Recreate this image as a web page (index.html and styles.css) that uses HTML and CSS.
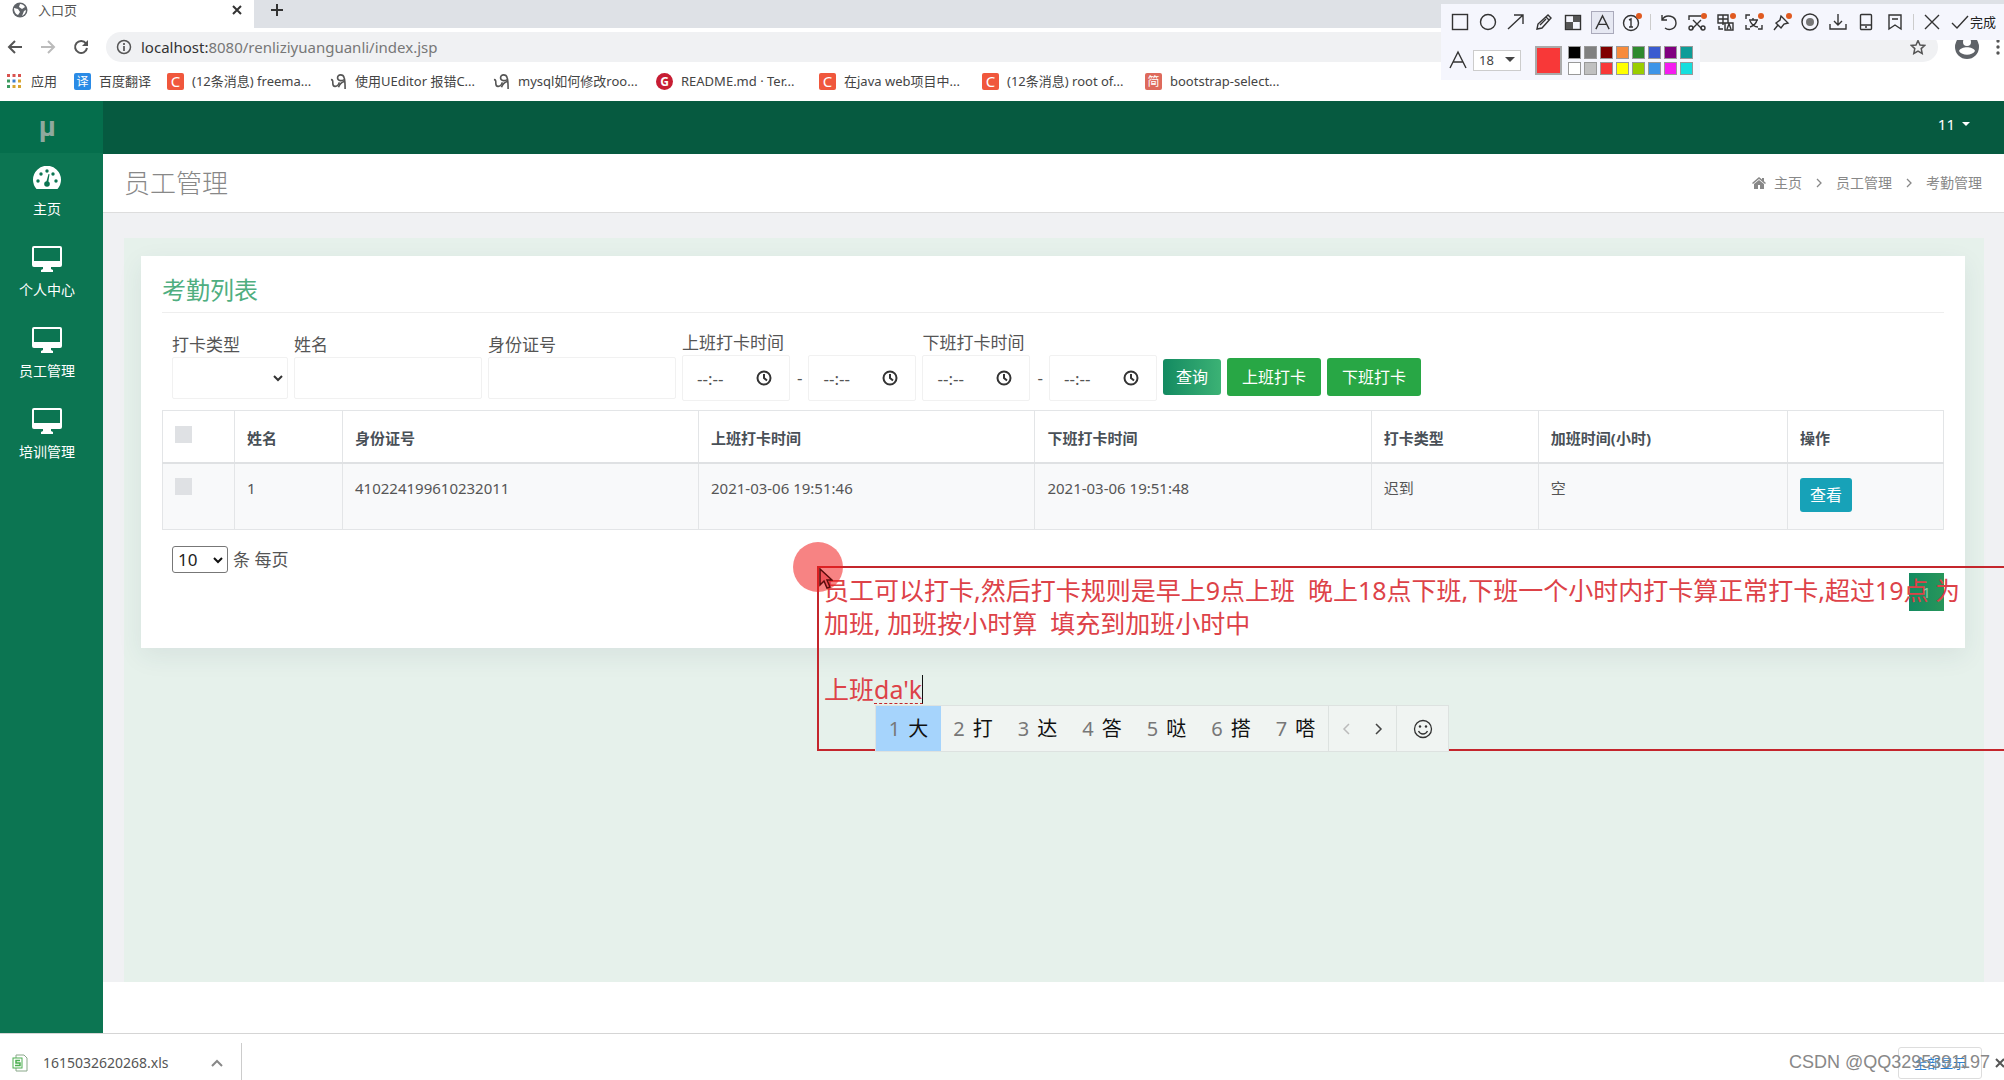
FILE: index.html
```html
<!DOCTYPE html>
<html lang="zh-CN">
<head>
<meta charset="utf-8">
<title>入口页</title>
<link rel="stylesheet" href="styles.css">
</head>
<body>
<svg class="defs" aria-hidden="true">
  <symbol id="monitor" viewBox="0 0 30 26"><path fill="currentColor" fill-rule="evenodd" d="M2 0h26a2 2 0 0 1 2 2v17a2 2 0 0 1-2 2h-9v2l2 1v2H9v-2l2-1v-2H2a2 2 0 0 1-2-2V2a2 2 0 0 1 2-2zm0 2v13h26V2z"/></symbol>
  <symbol id="clock" viewBox="0 0 16 16"><g fill="none" stroke="currentColor" stroke-width="2"><circle cx="8" cy="8" r="6.5"/><path d="M8 4v4l3 2.500"/></g></symbol>
  <symbol id="ueditor" viewBox="0 0 18 18"><g fill="none" stroke="#555" stroke-width="1.700"><path d="M1 7c2 0 2 1 2 4 0 4 4 4 6 1l1-2"/><path d="M16 17c0-5 0-9-1-12-1-4-7-4-7 0 0 3 4 4 7 2M9 15c1-3 3-5 6-6"/></g></symbol>
  <symbol id="chev" viewBox="0 0 10 10"><path d="M3 1l4 4-4 4" fill="none" stroke="currentColor" stroke-width="1.300"/></symbol>
</svg>

<header class="browser">
  <div class="tabs">
    <div class="tab">
      <svg width="16" height="16" viewBox="0 0 16 16"><circle cx="8" cy="8" r="7.500" fill="#5f6368"/><path d="M2 6l4 1 2 3-2 3c-3-1-4-4-4-7zM8 2c2 0 4 1 5 3l-3 2-3-2zM12 9l2-1c0 3-2 5-4 6z" fill="#fff"/></svg>
      <span class="tab-name">入口页</span>
      <svg class="tab-close" width="10" height="10" viewBox="0 0 10 10"><path d="M1 1l8 8M9 1l-8 8" stroke="#333" stroke-width="2"/></svg>
    </div>
    <svg class="tab-new" width="14" height="14" viewBox="0 0 14 14"><path d="M7 1v12M1 7h12" stroke="#333" stroke-width="2"/></svg>
  </div>
  <div class="toolbar">
    <svg width="16" height="16" viewBox="0 0 16 16"><path d="M15 8H2M8 2L2 8l6 6" fill="none" stroke="#555" stroke-width="2"/></svg>
    <svg width="16" height="16" viewBox="0 0 16 16"><path d="M1 8h13M8 2l6 6-6 6" fill="none" stroke="#bbb" stroke-width="2"/></svg>
    <svg width="16" height="16" viewBox="0 0 16 16"><path d="M13 4.500A6 6 0 1 0 14 9" fill="none" stroke="#555" stroke-width="2"/><path d="M15 1v6H9z" fill="#555"/></svg>
    <div class="address">
      <svg width="16" height="16" viewBox="0 0 16 16"><circle cx="8" cy="8" r="6.500" fill="none" stroke="#555" stroke-width="1.500"/><path d="M8 7v5M8 4v2" stroke="#555" stroke-width="1.700"/></svg>
      <span class="url"><b>localhost:</b>8080/renliziyuanguanli/index.jsp</span>
      <svg class="star" width="16" height="16" viewBox="0 0 16 16"><path d="M8 1.500l2 4.500 4.800.4-3.600 3.200 1 4.800L8 12l-4.200 2.400 1-4.800L1.200 6.400 6 6z" fill="none" stroke="#555" stroke-width="1.500"/></svg>
    </div>
    <svg width="24" height="24" viewBox="0 0 24 24"><circle cx="12" cy="12" r="12" fill="#5f6368"/><circle cx="12" cy="7" r="4" fill="#fff"/><path d="M4 16c2-5 14-5 16 0-3 5-13 5-16 0z" fill="#fff"/></svg>
    <svg width="4" height="16" viewBox="0 0 4 16" fill="#555"><circle cx="2" cy="2" r="1.700"/><circle cx="2" cy="8" r="1.700"/><circle cx="2" cy="14" r="1.700"/></svg>
  </div>
  <nav class="bookmarks">
    <a href="#" class="bm-apps"><svg width="14" height="14" viewBox="0 0 14 14"><path fill="#d9534f" d="M0 0h3v3H0zM5.500 0h3v3h-3zM11 0h3v3h-3z"/><path fill="#3b9a5f" d="M0 5.500h3v3H0z"/><path fill="#3f7fd0" d="M5.500 5.500h3v3h-3z"/><path fill="#d8a530" d="M11 5.500h3v3h-3zM5.500 11h3v3h-3zM11 11h3v3h-3z"/><path fill="#3b9a5f" d="M0 11h3v3H0z"/></svg>应用</a>
    <a href="#" class="bm-fanyi"><i class="fav blue">译</i>百度翻译</a>
    <a href="#"><i class="fav csdn">C</i>(12条消息) freema...</a>
    <a href="#"><svg width="17" height="17"><use href="#ueditor"/></svg>使用UEditor 报错C...</a>
    <a href="#"><svg width="17" height="17"><use href="#ueditor"/></svg>mysql如何修改roo...</a>
    <a href="#"><i class="fav gitee">G</i>README.md · Ter...</a>
    <a href="#"><i class="fav csdn">C</i>在java web项目中...</a>
    <a href="#"><i class="fav csdn">C</i>(12条消息) root of...</a>
    <a href="#"><i class="fav jian">简</i>bootstrap-select...</a>
  </nav>
</header>

<div class="app">
  <aside class="sidebar">
    <div class="logo">μ</div>
    <nav>
      <a href="#"><span class="ico"><svg width="28" height="24" viewBox="0 0 28 24"><path d="M3.500 23A14 14 0 1 1 24.500 23z" fill="#fff"/><g fill="#0c7552"><circle cx="5" cy="15" r="1.700"/><circle cx="8" cy="8" r="1.700"/><circle cx="14" cy="5" r="1.700"/><circle cx="20" cy="8" r="1.700"/><circle cx="23" cy="15" r="1.700"/><circle cx="14" cy="18" r="2.800"/><path d="M13 17l2.500-9 1 .3L15 18z"/></g></svg></span>主页</a>
      <a href="#"><span class="ico"><svg width="30" height="26"><use href="#monitor"/></svg></span>个人中心</a>
      <a href="#"><span class="ico"><svg width="30" height="26"><use href="#monitor"/></svg></span>员工管理</a>
      <a href="#"><span class="ico"><svg width="30" height="26"><use href="#monitor"/></svg></span>培训管理</a>
    </nav>
  </aside>
  <main class="main">
    <div class="topbar"><button class="user">11 <i class="caret"></i></button></div>
    <div class="pagehead">
      <h1>员工管理</h1>
      <nav class="crumbs">
        <svg width="14" height="12" viewBox="0 0 14 12"><path fill="#888" d="M7 0l3 2.500V1h2v3.200L14 6l-1 1-6-5-6 5-1-1zM7 3l5 4v5H8V8H6v4H2V7z"/></svg>
        <a href="#">主页</a>
        <svg class="sep" width="10" height="10"><use href="#chev"/></svg>
        <a href="#">员工管理</a>
        <svg class="sep" width="10" height="10"><use href="#chev"/></svg>
        <a href="#">考勤管理</a>
      </nav>
    </div>
    <div class="content">
      <div class="panel">
        <section class="card">
          <h2>考勤列表</h2>
          <form class="filters">
            <div class="field type"><label for="type">打卡类型</label>
              <div class="select"><select id="type"><option></option></select><svg width="10" height="7" viewBox="0 0 10 7"><path d="M1 1l4 4 4-4" fill="none" stroke="#333" stroke-width="2"/></svg></div></div>
            <div class="field text"><label for="name">姓名</label><input id="name" type="text"></div>
            <div class="field text"><label for="idno">身份证号</label><input id="idno" type="text"></div>
            <div class="field"><label for="in1">上班打卡时间</label>
              <div class="range"><span class="time"><input id="in1" type="text" value="--:--"><svg width="16" height="16"><use href="#clock"/></svg></span>-<span class="time"><input type="text" aria-label="上班打卡时间止" value="--:--"><svg width="16" height="16"><use href="#clock"/></svg></span></div></div>
            <div class="field"><label for="out1">下班打卡时间</label>
              <div class="range"><span class="time"><input id="out1" type="text" value="--:--"><svg width="16" height="16"><use href="#clock"/></svg></span>-<span class="time"><input type="text" aria-label="下班打卡时间止" value="--:--"><svg width="16" height="16"><use href="#clock"/></svg></span></div></div>
            <div class="actions">
              <button type="button" class="btn query">查询</button>
              <button type="button" class="btn ok">上班打卡</button>
              <button type="button" class="btn ok">下班打卡</button>
            </div>
          </form>
          <table>
            <colgroup><col class="c1"><col class="c2"><col class="c3"><col class="c4"><col class="c4"><col class="c5"><col class="c6"><col class="c7"></colgroup>
            <thead><tr><th><input type="checkbox" aria-label="全选"></th><th>姓名</th><th>身份证号</th><th>上班打卡时间</th><th>下班打卡时间</th><th>打卡类型</th><th>加班时间(小时)</th><th>操作</th></tr></thead>
            <tbody><tr><td><input type="checkbox" aria-label="选择"></td><td>1</td><td>410224199610232011</td><td>2021-03-06 19:51:46</td><td>2021-03-06 19:51:48</td><td>迟到</td><td>空</td><td class="op"><button type="button" class="btn view">查看</button></td></tr></tbody>
          </table>
          <div class="pagesize">
            <div class="select small"><select id="size"><option>10</option></select><svg width="10" height="7" viewBox="0 0 10 7"><path d="M1 1l4 4 4-4" fill="none" stroke="#111" stroke-width="2"/></svg></div>
            <label for="size">条 每页</label>
          </div>
          <div class="pager"><button type="button">1</button></div>
        </section>
      </div>
    </div>
    <footer class="foot"></footer>
  </main>
</div>

<div class="downloads">
  <div class="file">
    <svg width="16" height="18" viewBox="0 0 16 18"><path d="M4 1h8l3 3v13H4z" fill="#fff" stroke="#8aa88a"/><rect x="1" y="4" width="9" height="10" fill="#fff" stroke="#4caf50"/><path d="M8 6.500H4V9h4v2.500H3" fill="none" stroke="#4caf50" stroke-width="1.500"/></svg>
    <span>1615032620268.xls</span>
    <svg class="up" width="12" height="8" viewBox="0 0 12 8"><path d="M1 7l5-5 5 5" fill="none" stroke="#888" stroke-width="2"/></svg>
  </div>
  <button class="all">全部显示</button>
  <svg class="close" width="10" height="10" viewBox="0 0 10 10"><path d="M1 1l8 8M9 1l-8 8" stroke="#555" stroke-width="2"/></svg>
  <span class="mark">CSDN @QQ3295391197</span>
</div>

<div class="snip">
  <div class="tools">
    <svg viewBox="0 0 20 20"><rect x="2.500" y="2.500" width="15" height="15"/></svg>
    <svg viewBox="0 0 20 20"><circle cx="10" cy="10" r="7.500"/></svg>
    <svg viewBox="0 0 20 20"><path d="M2 17L17 3M8 3h9v9"/></svg>
    <svg viewBox="0 0 20 20"><path d="M3 17l1-5L14 3l3 3-9 10zM12 5l3 3M6 13l6-6"/></svg>
    <svg viewBox="0 0 20 20"><rect x="2.500" y="3.500" width="15" height="14"/><path class="f" d="M10 4h7v6h-7zM3 10h7v7H3z"/></svg>
    <svg class="on" viewBox="0 0 20 20"><path d="M3 17l7-14 7 14M6 12h8"/></svg>
    <svg viewBox="0 0 20 20"><circle cx="9" cy="11" r="7.500"/><path d="M7 8l2-1v8M7 15h4"/><circle class="dot" cx="17" cy="4" r="3"/></svg>
    <i class="bar"></i>
    <svg viewBox="0 0 20 20"><path d="M3 3v5h5M3 8c4-7 14-4 14 3 0 6-7 8-11 5"/></svg>
    <svg viewBox="0 0 20 20"><path d="M2 8V4h12M6 8l9 9M14 8l-9 9"/><circle cx="4" cy="16" r="2"/><circle cx="16" cy="16" r="2"/><circle class="dot" cx="17" cy="4" r="3"/></svg>
    <svg viewBox="0 0 20 20"><path d="M2 3h10v8H2zM2 7h10M7 3v10M9 11h8v7H9zM11 17l2-5 2 5M3 14v3h4"/><circle class="dot" cx="17" cy="4" r="3"/></svg>
    <svg viewBox="0 0 20 20"><path d="M2 7V3h4M2 13v4h4M14 17h4v-4M5 8h9M9 6v2M13 8c-1 4-4 6-7 7M6 9c2 4 5 6 8 6"/><circle class="dot" cx="17" cy="4" r="3"/></svg>
    <svg viewBox="0 0 20 20"><path d="M9 4l7 7-4 1-3 4-5-5 4-3zM6 13l-4 5"/><circle class="dot" cx="17" cy="4" r="3"/></svg>
    <svg viewBox="0 0 20 20"><circle cx="10" cy="10" r="8"/><circle class="g" cx="10" cy="10" r="4"/></svg>
    <svg viewBox="0 0 20 20"><path d="M10 2v11M6 9l4 4 4-4M2 12v5h16v-5"/></svg>
    <svg viewBox="0 0 20 20"><rect x="4.500" y="2.500" width="11" height="15" rx="1"/><path d="M5 13h10M9 15h2"/></svg>
    <svg viewBox="0 0 20 20"><path d="M4 3h12v14l-6-4-6 4zM7 7h6"/></svg>
    <i class="bar"></i>
    <svg viewBox="0 0 20 20"><path d="M3 3l14 14M17 3L3 17"/></svg>
    <span class="done"><svg viewBox="0 0 20 20"><path d="M2 11l5 5L18 4"/></svg>完成</span>
  </div>
  <div class="options">
    <svg viewBox="0 0 20 20"><path d="M2 18l8-16 8 16M5 12h10"/></svg>
    <div class="fsize"><select aria-label="字号"><option>18</option></select><i class="caret"></i></div>
    <i class="current"></i>
    <div class="swatches">
      <i style="background:#000"></i><i style="background:#808080"></i><i style="background:#800000"></i><i style="background:#f78b3c"></i><i style="background:#2f8a2f"></i><i style="background:#3a5bd0"></i><i style="background:#800080"></i><i style="background:#0e9c98"></i>
      <i style="background:#fff"></i><i style="background:#c0c0c0"></i><i style="background:#f83838"></i><i style="background:#ff0"></i><i style="background:#9acd00"></i><i style="background:#3d94e8"></i><i style="background:#f41af0"></i><i style="background:#16dede"></i>
    </div>
  </div>
</div>

<div class="note">
  <p>员工可以打卡,然后打卡规则是早上9点上班  晚上18点下班,下班一个小时内打卡算正常打卡,超过19点 为
加班, 加班按小时算  填充到加班小时中

上班<u>da'k</u></p>
  <i class="spot"></i>
  <svg class="cursor" width="14" height="22" viewBox="0 0 14 22"><path d="M1 1v16l4-4 3 7 3-1-3-7h5z" fill="#f0555a" stroke="#5a0c0c" stroke-width="1.500"/></svg>
</div>
<div class="ime">
  <span class="cand sel"><em>1</em>大</span><span class="cand"><em>2</em>打</span><span class="cand"><em>3</em>达</span><span class="cand"><em>4</em>答</span><span class="cand"><em>5</em>哒</span><span class="cand"><em>6</em>搭</span><span class="cand"><em>7</em>嗒</span>
  <span class="nav"><svg width="10" height="14" viewBox="0 0 10 14"><path d="M8 2L3 7l5 5" fill="none" stroke="#bbb" stroke-width="1.500"/></svg><svg width="10" height="14" viewBox="0 0 10 14"><path d="M2 2l5 5-5 5" fill="none" stroke="#444" stroke-width="1.500"/></svg></span>
  <span class="smile"><svg width="20" height="20" viewBox="0 0 20 20"><g fill="none" stroke="#333" stroke-width="1.300"><circle cx="10" cy="10" r="8.500"/><path d="M5.500 12c2 4 7 4 9 0"/></g><circle cx="7" cy="7.500" r="1.200" fill="#333"/><circle cx="13" cy="7.500" r="1.200" fill="#333"/></svg></span>
</div>
</body>
</html>
```
FILE: styles.css
```css
* { box-sizing: border-box; }
body {
  margin: 0; min-height: 100vh; display: flex; flex-direction: column; position: relative; overflow-x: hidden;
  font: 15px/20px "Noto Sans", "Noto Sans CJK SC", sans-serif; color: #555; background: #fff;
}
a { color: inherit; text-decoration: none; }
i, em { font-style: normal; }
button, input, select { font: inherit; color: inherit; margin: 0; }
svg { flex: none; }
.defs { position: absolute; width: 0; height: 0; }
.caret { display: inline-block; border: 4px solid transparent; border-top-color: currentColor; border-bottom: 0; }

/* browser window */
.browser { height: 101px; }
.tabs { height: 28px; display: flex; align-items: center; background: #dee1e6; }
.tab { width: 254px; height: 28px; padding: 0 12px 8px; display: flex; align-items: center; gap: 10px; background: #fff; font-size: 13px; }
.tab-close { margin-left: auto; }
.tab-new { margin: 0 0 8px 16px; }
.toolbar { height: 37px; padding: 0 4px 0 7px; display: flex; align-items: center; gap: 17px; }
.address { flex: 1; height: 30px; padding: 0 12px 0 10px; display: flex; align-items: center; gap: 9px; background: #f0f1f3; border-radius: 15px; color: #777; }
.url b { font-weight: 400; color: #333; }
.star { margin-left: auto; }
.bookmarks { height: 32px; padding-left: 7px; display: flex; align-items: center; font-size: 13px; color: #444; }
.bookmarks a { width: 163px; display: flex; align-items: center; gap: 8px; white-space: nowrap; }
.bookmarks .bm-apps { width: 67px; gap: 10px; }
.bookmarks .bm-fanyi { width: 93px; }
.fav { width: 17px; height: 17px; border-radius: 2px; color: #fff; font-size: 12px; line-height: 17px; text-align: center; }
.blue { background: #2a8be6; }
.csdn { background: #f0573c; font-size: 15px; }
.gitee { background: #c71d33; border-radius: 50%; font-weight: 700; }
.jian { background: #de6a5c; }

/* application */
.app { flex: 1; display: flex; }
.sidebar { width: 103px; flex: none; background: #0c7552; color: #fff; text-align: center; font-size: 14px; }
.logo { height: 52px; padding-right: 8px; background: #056e4c; color: #8fa99e; font: 700 28px/52px Roboto, sans-serif; }
.sidebar nav { padding: 3px 9px 0 0; }
.sidebar nav a { display: block; height: 81px; }
.ico { height: 43px; display: flex; align-items: center; justify-content: center; }
.main { flex: 1; min-width: 0; display: flex; flex-direction: column; background: #f0f1f3; }
.topbar { height: 53px; padding-right: 34px; display: flex; justify-content: flex-end; align-items: center; background: #065a40; }
.user { padding: 0 0 8px; border: 0; background: none; color: #fff; display: flex; align-items: center; gap: 7px; }
.pagehead { height: 59px; padding: 0 22px 0 21px; display: flex; align-items: center; justify-content: space-between; background: #fff; border-bottom: 1px solid #ddd; color: #888; }
h1 { margin: 0; font-size: 26px; line-height: 36px; font-weight: 300; }
.crumbs { display: flex; align-items: center; gap: 8px; font-size: 14px; }
.crumbs .sep { margin: 0 4px; }
.content { flex: 1; padding: 25px 20px 0 21px; display: flex; }
.panel { flex: 1; min-width: 0; padding: 18px 19px 0 17px; background: #e6f1eb; }
.card { min-height: 392px; padding: 18px 21px 36px; background: #fff; box-shadow: 0 8px 24px rgba(40, 60, 90, .08); }
h2 { margin: 0 0 14px; padding-bottom: 6px; border-bottom: 1px solid #eee; font-size: 24px; line-height: 32px; font-weight: 400; color: #4fae80; }
.filters { height: 83px; padding: 0 10px; display: flex; gap: 6px; align-items: flex-start; font-size: 17px; white-space: nowrap; }
.field label { display: block; height: 28px; line-height: 32px; }
.field input, .type select { width: 100%; height: 42px; border: 1px solid #f1f1f1; border-radius: 2px; background: #fff; display: block; }
.text { width: 188px; padding-top: 2px; }
.type { width: 116px; padding-top: 2px; }
.select { position: relative; }
.select select, .fsize select { appearance: none; }
.select svg { position: absolute; right: 5px; top: 50%; margin-top: -3px; pointer-events: none; }
.range { display: flex; align-items: center; }
.time { position: relative; width: 108px; }
.range .time:first-child { margin-right: 7px; }
.range .time:last-child { margin-left: 6px; }
.time input { height: 46px; padding: 0 14px; font-size: 17px; }
.time svg { position: absolute; right: 18px; top: 15px; color: #333; }
.actions { padding-top: 31px; display: flex; gap: 6px; align-items: center; }
.btn { height: 38px; padding: 0 15px; border: 0; border-radius: 3px; color: #fff; font-size: 16px; }
.query { height: 36px; padding: 0 13px; background: linear-gradient(90deg, #138a61, #3cb275); }
.ok { background: #28a745; }
table { width: 100%; table-layout: fixed; border-collapse: collapse; }
th, td { padding: 14px 12px; text-align: left; vertical-align: top; border: 1px solid #e3e5e7; }
th { height: 52px; padding: 17px 12px 12px; border-bottom: 2px solid #dfe1e3; color: #495057; }
td { height: 67px; background: #f8f9fa; }
.view { height: 34px; padding: 0 10px; background: #17a2b8; }
table input { appearance: none; display: block; width: 17px; height: 17px; background: #dfe1e4; }
th input { margin-top: -2px; }
.c1 { width: 72px; } .c2 { width: 108px; } .c3 { width: 20%; } .c4 { width: 336px; width: 18.9%; } .c5 { width: 167px; } .c6 { width: 14%; } .c7 { width: 156px; }
.pagesize { padding: 16px 10px 0; display: flex; align-items: center; gap: 5px; font-size: 17px; }
.small select { width: 56px; height: 27px; padding: 0 5px; border: 1px solid #777; border-radius: 3px; background: #fff; color: #222; }
.pager { display: flex; justify-content: flex-end; }
.pager button { width: 35px; height: 38px; border: 0; color: #8fc8a8; background: linear-gradient(90deg, #138a61, #28965a); }
.foot { height: 51px; background: #fff; }

/* download shelf */
.downloads { position: relative; height: 47px; border-top: 1px solid #d5d5d5; display: flex; align-items: center; padding: 11px 0 0; background: #fff; overflow: hidden; }
.file { width: 242px; height: 40px; padding: 0 18px 0 12px; display: flex; align-items: center; gap: 15px; border-right: 1px solid #ccc; font-size: 14px; }
.up { margin-left: auto; }
.all { margin-left: auto; width: 84px; height: 32px; border: 1px solid #ddd; border-radius: 3px; background: #fff; color: #2a7fd0; font-size: 13px; }
.close { margin: 0 -1px 0 13px; }
.mark { position: absolute; right: 14px; top: 17px; font: 18px/22px "Liberation Sans", sans-serif; color: #888; }

/* capture tool palette */
.snip { position: absolute; top: 4px; right: 0; width: 563px; }
.snip svg { fill: none; stroke: #333; stroke-width: 1.400; width: 20px; height: 20px; }
.tools { height: 36px; padding: 0 8px 0 9px; display: flex; align-items: center; justify-content: space-between; background: #f5f6fd; }
.tools .on { width: 23px; height: 23px; padding: 1px; border: 1px solid #aab; background: #e6e8f2; }
.tools .f { fill: #555; stroke: none; }
.tools .g { fill: #777; stroke: none; }
.tools .dot { fill: #e05a20; stroke: none; }
.bar { width: 1px; height: 16px; background: #ccc; }
.done { display: flex; align-items: center; font-size: 13px; color: #222; }
.options { width: 259px; height: 40px; padding: 0 7px; display: flex; align-items: center; background: #f5f6fd; }
.fsize { position: relative; width: 48px; margin: 0 14px 0 5px; color: #444; }
.fsize select { width: 48px; height: 21px; padding: 0 5px; border: 1px solid #ccc; border-radius: 0; background: #fff; font: 13px/19px "Noto Sans", sans-serif; }
.fsize .caret { position: absolute; right: 6px; top: 8px; border-width: 5px 5px 0; }
.current { width: 29px; height: 29px; margin-right: 6px; background: #f83838; border: 2px solid #aaa; }
.swatches { display: grid; grid-template-columns: repeat(8, 13px); grid-auto-rows: 13px; gap: 3px; }
.swatches i { border: 1px solid #999; }

/* annotation being typed over the page */
.note { position: absolute; left: 817px; right: -3px; top: 566px; height: 185px; border: 2px solid #c4262c; }
.note p { margin: 0; padding: 6px 5px; white-space: pre; font-size: 25px; line-height: 33px; color: #dd4248; }
.note u { text-decoration: none; display: inline-block; line-height: 28px; border-bottom: 1px dashed #c4262c; border-right: 1px solid #111; }
.spot { position: absolute; left: -26px; top: -26px; width: 50px; height: 50px; border-radius: 50%; background: rgba(240, 30, 30, .55); }
.cursor { position: absolute; left: 0; top: 0; }
.ime { position: absolute; left: 875px; top: 705px; height: 47px; display: flex; background: #f0f4f2; border: 1px solid #dde2e0; font-size: 20px; color: #111; }
.cand { width: 64px; display: flex; align-items: center; justify-content: center; gap: 8px; }
.cand:nth-child(odd) { width: 65px; }
.cand em { color: #777; }
.sel { background: #a6d4fc; }
.nav { width: 68px; display: flex; align-items: center; justify-content: space-around; border-left: 1px solid #dde2e0; }
.smile { width: 52px; display: flex; align-items: center; justify-content: center; border-left: 1px solid #dde2e0; }
```
